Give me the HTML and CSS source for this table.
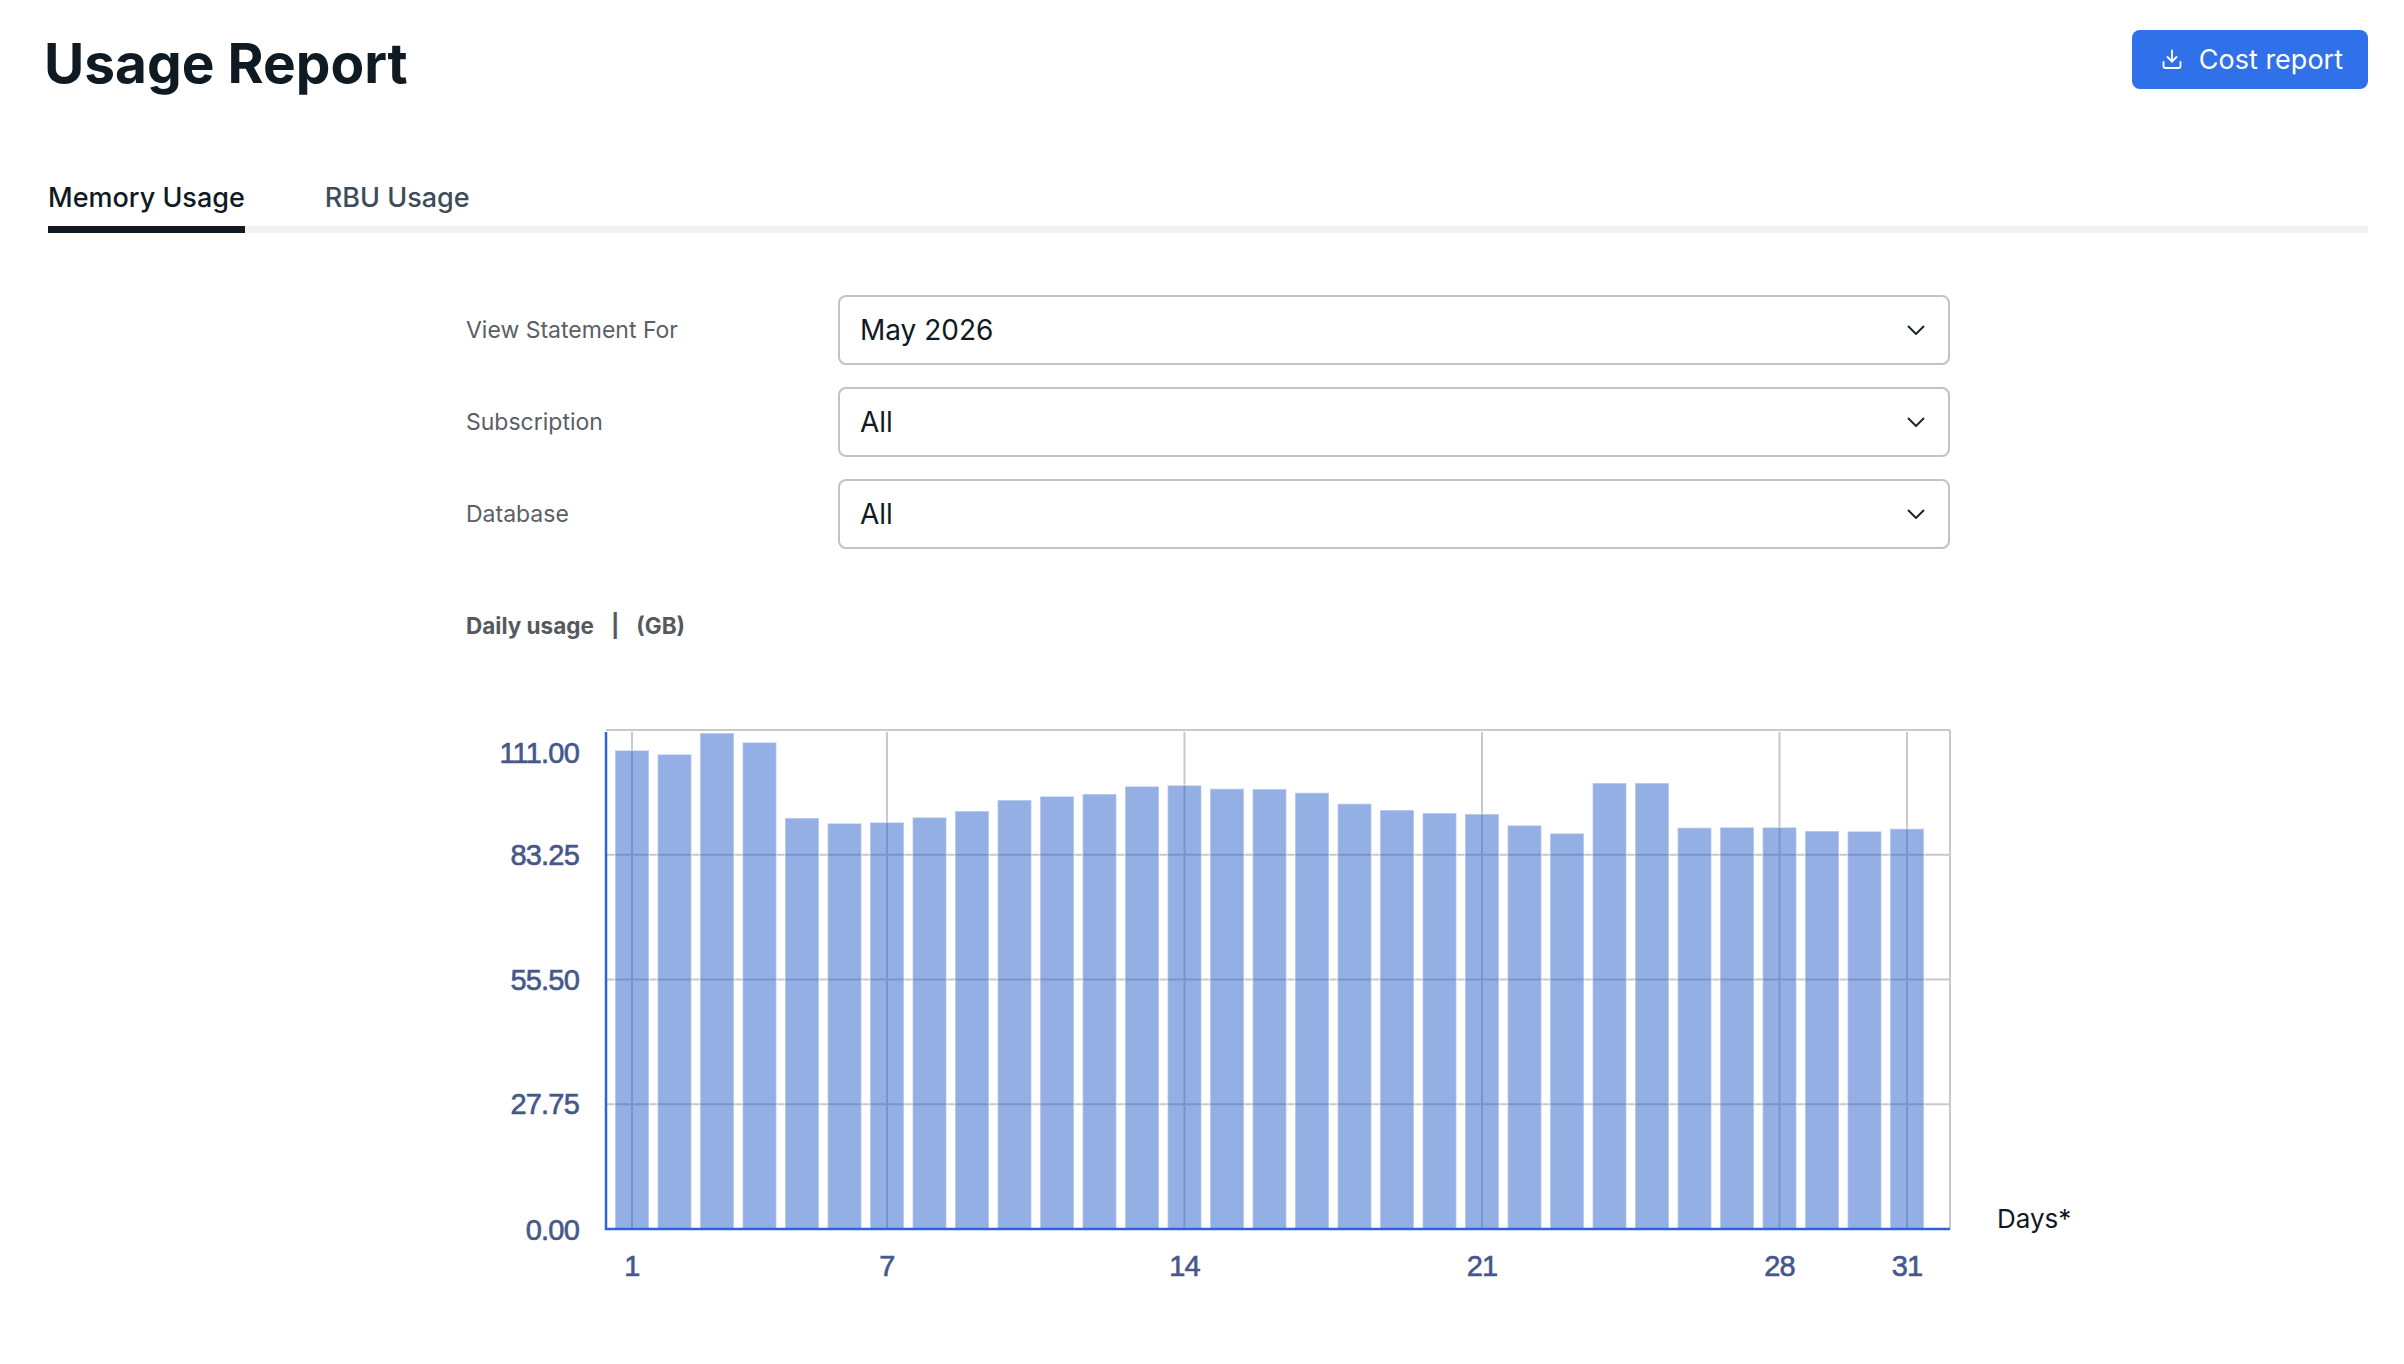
FILE: index.html
```html
<!DOCTYPE html>
<html lang="en">
<head>
<meta charset="utf-8">
<title>Usage Report</title>
<link rel="stylesheet" href="styles.css">
</head>
<body>
<div class="page">
  <header class="header">
    <h1 class="title">Usage Report</h1>
    <button class="btn" type="button">
      <svg viewBox="0 0 24 24" fill="none" stroke="currentColor" stroke-width="1.8" stroke-linecap="round" stroke-linejoin="round"><path d="M12 3v11"/><path d="M7.5 9.5 12 14l4.5-4.5"/><path d="M3.5 14.5v4a2 2 0 0 0 2 2h13a2 2 0 0 0 2-2v-4"/></svg>
      <span>Cost report</span>
    </button>
  </header>

  <nav class="tabs">
    <div class="tab active">Memory Usage</div>
    <div class="tab">RBU Usage</div>
  </nav>

  <section class="report">
    <div class="filters">
      <div class="label">View Statement For</div>
      <div class="select"><span>May 2026</span><svg class="chev" viewBox="0 0 18 10"><polyline points="1,1 9,9 17,1"/></svg></div>
      <div class="label">Subscription</div>
      <div class="select"><span>All</span><svg class="chev" viewBox="0 0 18 10"><polyline points="1,1 9,9 17,1"/></svg></div>
      <div class="label">Database</div>
      <div class="select"><span>All</span><svg class="chev" viewBox="0 0 18 10"><polyline points="1,1 9,9 17,1"/></svg></div>
    </div>

    <div class="chart-title">Daily usage<span class="sep">|</span>(GB)</div>

    <svg class="chart" width="1614" height="600" viewBox="0 0 1614 600">
      <g class="grid">
        <line x1="140" y1="30" x2="1484" y2="30"/>
        <line x1="1484" y1="30" x2="1484" y2="529"/>
        <line x1="140" y1="404.25" x2="1484" y2="404.25"/>
        <line x1="140" y1="279.5" x2="1484" y2="279.5"/>
        <line x1="140" y1="154.75" x2="1484" y2="154.75"/>
        <line x1="166" y1="32" x2="166" y2="529"/>
        <line x1="421" y1="32" x2="421" y2="529"/>
        <line x1="718.5" y1="32" x2="718.5" y2="529"/>
        <line x1="1016" y1="32" x2="1016" y2="529"/>
        <line x1="1313.5" y1="32" x2="1313.5" y2="529"/>
        <line x1="1441" y1="32" x2="1441" y2="529"/>
      </g>
      <g class="bars">
        <rect x="149" y="50.3" width="34" height="478.7"/>
        <rect x="191.5" y="54.3" width="34" height="474.7"/>
        <rect x="234" y="33" width="34" height="496"/>
        <rect x="276.5" y="42.3" width="34" height="486.7"/>
        <rect x="319" y="118" width="34" height="411"/>
        <rect x="361.5" y="123.3" width="34" height="405.7"/>
        <rect x="404" y="122.3" width="34" height="406.7"/>
        <rect x="446.5" y="117.3" width="34" height="411.7"/>
        <rect x="489" y="111" width="34" height="418"/>
        <rect x="531.5" y="100" width="34" height="429"/>
        <rect x="574" y="96.3" width="34" height="432.7"/>
        <rect x="616.5" y="94" width="34" height="435"/>
        <rect x="659" y="86.3" width="34" height="442.7"/>
        <rect x="701.5" y="85.3" width="34" height="443.7"/>
        <rect x="744" y="88.7" width="34" height="440.3"/>
        <rect x="786.5" y="89" width="34" height="440"/>
        <rect x="829" y="92.7" width="34" height="436.3"/>
        <rect x="871.5" y="103.7" width="34" height="425.3"/>
        <rect x="914" y="110" width="34" height="419"/>
        <rect x="956.5" y="113" width="34" height="416"/>
        <rect x="999" y="114" width="34" height="415"/>
        <rect x="1041.5" y="125.3" width="34" height="403.7"/>
        <rect x="1084" y="133.3" width="34" height="395.7"/>
        <rect x="1126.5" y="83" width="34" height="446"/>
        <rect x="1169" y="83" width="34" height="446"/>
        <rect x="1211.5" y="127.7" width="34" height="401.3"/>
        <rect x="1254" y="127.3" width="34" height="401.7"/>
        <rect x="1296.5" y="127.3" width="34" height="401.7"/>
        <rect x="1339" y="131" width="34" height="398"/>
        <rect x="1381.5" y="131.3" width="34" height="397.7"/>
        <rect x="1424" y="128.7" width="34" height="400.3"/>
      </g>
      <g class="axis">
        <line x1="140" y1="32" x2="140" y2="530"/>
        <line x1="139" y1="529" x2="1484" y2="529"/>
      </g>
      <g class="ticks-y">
        <text x="113" y="53">111.00</text>
        <text x="113" y="154.75">83.25</text>
        <text x="113" y="279.5">55.50</text>
        <text x="113" y="404.25">27.75</text>
        <text x="113" y="530">0.00</text>
      </g>
      <g class="ticks-x">
        <text x="166" y="566">1</text>
        <text x="421" y="566">7</text>
        <text x="718.5" y="566">14</text>
        <text x="1016" y="566">21</text>
        <text x="1313.5" y="566">28</text>
        <text x="1441" y="566">31</text>
      </g>
      <text class="days" x="1531" y="518">Days*</text>
    </svg>
  </section>
</div>
</body>
</html>
```

FILE: styles.css
```css
* { box-sizing: border-box; }

body {
  margin: 0;
  background: #ffffff;
  font-family: Inter, "Noto Sans", sans-serif;
  color: #0f1a23;
}

.page {
  padding: 30px 36px 0 48px;
}

.header {
  display: flex;
  justify-content: space-between;
  align-items: flex-start;
}

.title {
  margin: 0 0 0 -4px;
  font-size: 55px;
  line-height: 66px;
  font-weight: 700;
  letter-spacing: 0;
  color: #0f1a23;
}

.btn {
  display: flex;
  align-items: center;
  gap: 15px;
  height: 59px;
  padding: 0 25px 0 28px;
  background: #3070e8;
  color: #ffffff;
  border: none;
  border-radius: 8px;
  font-family: inherit;
  font-size: 27px;
  font-weight: 400;
}

.btn svg {
  width: 24px;
  height: 25px;
}

.tabs {
  display: flex;
  gap: 80px;
  margin-top: 85px;
  border-bottom: 7px solid #f1f1f1;
}

.tab {
  font-size: 27px;
  line-height: 33px;
  font-weight: 500;
  color: #3e4c5a;
  padding-bottom: 12px;
}

.tab.active {
  color: #0f1a23;
  border-bottom: 7px solid #0f1a23;
  margin-bottom: -7px;
}

.report {
  width: 1484px;
  margin: 62px auto 0;
}

.filters {
  display: grid;
  grid-template-columns: 372px 1fr;
  row-gap: 22px;
  align-items: center;
}

.label {
  font-size: 23px;
  color: #5b6066;
}

.select {
  height: 70px;
  border: 2px solid #bfc4c8;
  border-radius: 8px;
  display: flex;
  align-items: center;
  justify-content: space-between;
  padding: 0 23px 0 20px;
  font-size: 28px;
  color: #111a22;
}

.chev {
  width: 18px;
  height: 10px;
  fill: none;
  stroke: #1d2731;
  stroke-width: 2;
}

.chart-title {
  margin-top: 63px;
  font-size: 22.5px;
  line-height: 28px;
  font-weight: 700;
  color: #55595e;
}

.sep {
  margin: 0 17px;
}

.chart {
  display: block;
  margin-top: 60px;
  overflow: visible;
}

.grid line {
  stroke: #c9c9c9;
  stroke-width: 2;
}

.bars rect {
  fill: rgba(41, 95, 199, 0.5);
  stroke: rgba(255, 255, 255, 0.45);
  stroke-width: 1.5;
}

.axis line {
  stroke: #2f63d6;
  stroke-width: 2.5;
}

.ticks-y text,
.ticks-x text {
  font-family: "Liberation Sans", Arial, sans-serif;
  font-size: 29px;
  fill: #46588a;
  stroke: #46588a;
  stroke-width: 0.6px;
  dominant-baseline: central;
  letter-spacing: -0.8px;
}

.ticks-y text {
  text-anchor: end;
}

.ticks-x text {
  text-anchor: middle;
}

.days {
  font-family: Inter, "Noto Sans", sans-serif;
  font-size: 26px;
  fill: #111a22;
  dominant-baseline: central;
}
```
